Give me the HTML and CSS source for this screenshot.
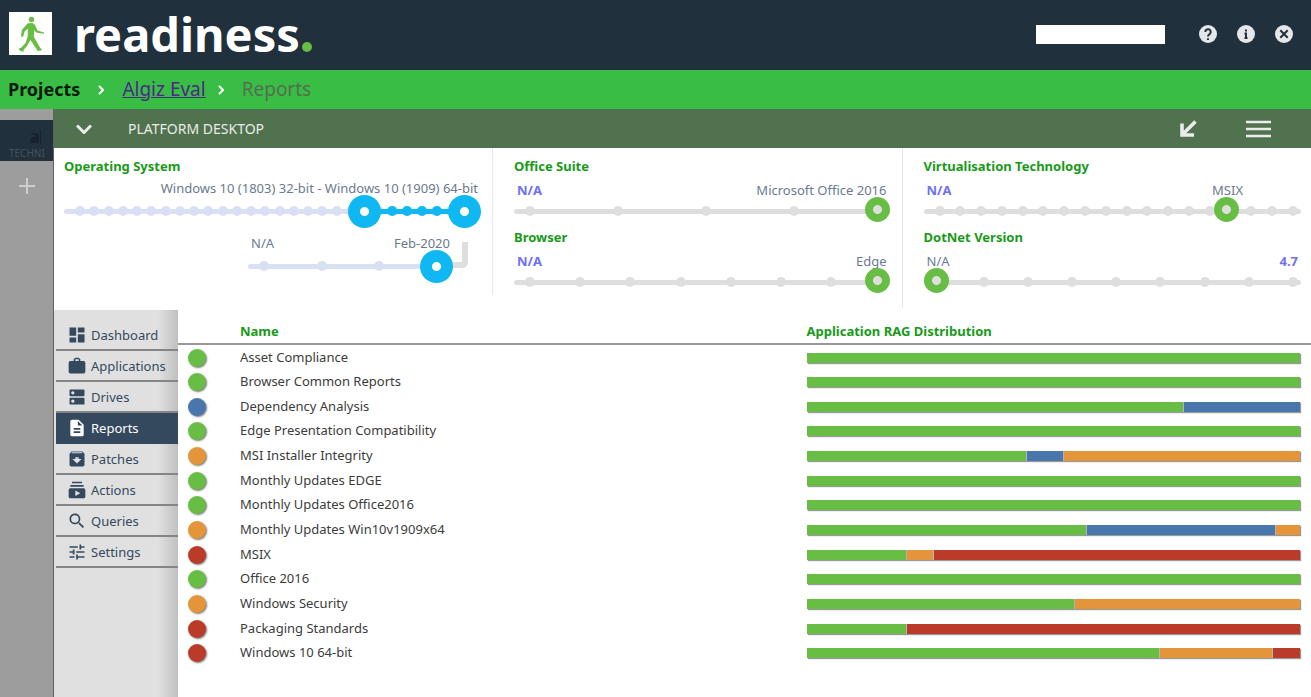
FILE: index.html
```
<!DOCTYPE html>
<html lang="en">
<head>
<meta charset="utf-8">
<title>Readiness - Reports</title>
<link rel="stylesheet" href="styles.css">
</head>
<body>
<header class="topbar">
  <svg class="logo" viewBox="0 0 43 43" aria-hidden="true"><rect width="43" height="43" fill="#fff"/><circle cx="22.500" cy="7.500" r="2.700" fill="#68bd45"/><path d="M18.500 11.500c3-1 6.500-.8 7.500 1.500l2.500 5.500 6.500 2v1.300l-8-1.300-1.800-2.500-.4 6.500 3 5.500 3.500 6 1.500 1.500-.5 1-3.500.5-1-1.500-6.300-9.500-3.500 6-3.500 4 .500 1.500-3-.3-2.300-2 1-1.300 1.500-.2 4.500-5 2-6.500.3-7.500-3.300 2.500-1.500 5.500-2.200-.2.800-6.500z" fill="#68bd45"/></svg>
  <h1 class="brand">readiness<span class="brand-dot"></span></h1>
  <div class="tools">
    <input class="search" type="text" aria-label="Search">
    <button class="round" aria-label="Help"><svg viewBox="0 0 18 18"><circle cx="9" cy="9" r="9"/><path d="M6.300 6.900a2.700 2.700 0 1 1 4.400 2.100C9.500 9.900 9 10.300 9 11.500M9 13.200v1.800" class="cut"/></svg></button>
    <button class="round" aria-label="Information"><svg viewBox="0 0 18 18"><circle cx="9" cy="9" r="9"/><path d="M9 4.500v2M7.500 8.500H9V13M7.500 13h3" class="cut"/></svg></button>
    <button class="round" aria-label="Close"><svg viewBox="0 0 18 18"><circle cx="9" cy="9" r="9"/><path d="M5.300 5.300l7.400 7.400M12.700 5.300l-7.400 7.400" class="cut"/></svg></button>
  </div>
</header>
<nav class="crumbs" aria-label="Breadcrumb">
  <strong>Projects</strong>
  <svg class="sep" viewBox="0 0 6 10"><path d="M1 1l4 4-4 4"/></svg>
  <a href="#project">Algiz Eval</a>
  <svg class="sep sep-near" viewBox="0 0 6 10"><path d="M1 1l4 4-4 4"/></svg>
  <span class="here">Reports</span>
</nav>
<div class="shell">
  <aside class="rail">
    <button class="rail-tab"><svg viewBox="0 0 14 14"><path d="M2 5l3-2h4l2 2v8H2v-4l2-2h3V5zM12 0h1v14h-1z"/></svg><span>TECHNI</span></button>
    <button class="rail-add" aria-label="Add"><svg viewBox="0 0 18 18"><path d="M9 1v16M1 9h16"/></svg></button>
  </aside>
  <main class="main">
    <div class="platform">
      <button class="bar-btn" aria-label="Collapse"><svg width="16" height="10" viewBox="0 0 16 10"><path d="M1 1.500l7 7 7-7" fill="none" stroke="#ececec" stroke-width="3"/></svg></button>
      <h2>PLATFORM DESKTOP</h2>
      <button class="bar-btn bar-end" aria-label="Shrink"><svg width="17" height="17" viewBox="0 0 17 17"><path d="M15.500 1.500L3 14M2 3.500V15h12" fill="none" stroke="#ececec" stroke-width="3.600"/></svg></button>
      <button class="bar-btn" aria-label="Menu"><svg width="25" height="18" viewBox="0 0 25 18"><path d="M0 2h25M0 9h25M0 16h25" stroke="#ececec" stroke-width="2.600"/></svg></button>
    </div>
    <section class="settings">
      <div class="group group-os">
        <h3>Operating System</h3>
        <div class="labels labels-end"><span>Windows 10 (1803) 32-bit - Windows 10 (1909) 64-bit</span></div>
        <div class="slider blue" id="os"><div class="ticks"></div><div class="fill"><div class="ticks fill-ticks"><i></i><i></i><i></i><i></i></div></div>
          <input type="range" min="0" max="27" value="20" aria-label="Operating system from"><input type="range" min="0" max="27" value="27" aria-label="Operating system to"></div>
        <div class="update">
          <div class="elbow"></div>
          <div class="labels"><span>N/A</span><span>Feb-2020</span></div>
          <div class="slider blue"><div class="ticks"><i></i><i></i><i></i><i></i></div><input type="range" min="0" max="3" value="3" aria-label="Update level"></div>
        </div>
      </div>
      <div class="group">
        <h3>Office Suite</h3>
        <div class="labels"><b>N/A</b><span>Microsoft Office 2016</span></div>
        <div class="slider"><div class="ticks"><i></i><i></i><i></i><i></i><i></i></div><input type="range" min="0" max="4" value="4" aria-label="Office suite"></div>
        <h3>Browser</h3>
        <div class="labels"><b>N/A</b><span>Edge</span></div>
        <div class="slider"><div class="ticks"><i></i><i></i><i></i><i></i><i></i><i></i><i></i><i></i></div><input type="range" min="0" max="7" value="7" aria-label="Browser"></div>
      </div>
      <div class="group">
        <h3>Virtualisation Technology</h3>
        <div class="labels labels-msix"><b>N/A</b><span>MSIX</span></div>
        <div class="slider"><div class="ticks"><i></i><i></i><i></i><i></i><i></i><i></i><i></i><i></i><i></i><i></i><i></i><i></i><i></i><i></i><i></i><i></i><i></i><i></i></div><input type="range" min="0" max="17" value="14" aria-label="Virtualisation technology"></div>
        <h3>DotNet Version</h3>
        <div class="labels"><span>N/A</span><b>4.7</b></div>
        <div class="slider"><div class="ticks"><i></i><i></i><i></i><i></i><i></i><i></i><i></i><i></i><i></i></div><input type="range" min="0" max="8" value="0" aria-label="DotNet version"></div>
      </div>
    </section>
    <div class="work">
      <nav class="menu" aria-label="Sections">
        <a href="#dashboard"><svg viewBox="0 0 24 24"><path d="M3 13h8V3H3zm0 8h8v-6H3zm10 0h8V11h-8zm0-18v6h8V3z"/></svg>Dashboard</a>
        <a href="#applications"><svg viewBox="0 0 24 24"><path d="M20 6h-4V4l-2-2h-4L8 4v2H4a2 2 0 0 0-2 2v11a2 2 0 0 0 2 2h16a2 2 0 0 0 2-2V8a2 2 0 0 0-2-2zm-6 0h-4V4h4z"/></svg>Applications</a>
        <a href="#drives"><svg viewBox="0 0 24 24"><path d="M20 13H4a1 1 0 0 0-1 1v6a1 1 0 0 0 1 1h16a1 1 0 0 0 1-1v-6a1 1 0 0 0-1-1zM7 19a2 2 0 1 1 0-4 2 2 0 0 1 0 4zM20 3H4a1 1 0 0 0-1 1v6a1 1 0 0 0 1 1h16a1 1 0 0 0 1-1V4a1 1 0 0 0-1-1zM7 9a2 2 0 1 1 0-4 2 2 0 0 1 0 4z"/></svg>Drives</a>
        <a href="#reports" class="active" aria-current="page"><svg viewBox="0 0 24 24"><path d="M14 2H6a2 2 0 0 0-2 2v16a2 2 0 0 0 2 2h12a2 2 0 0 0 2-2V8zm2 16H8v-2h8zm0-4H8v-2h8zm-3-5V3.500L18.500 9z"/></svg>Reports</a>
        <a href="#patches"><svg viewBox="0 0 24 24"><path d="M20.500 5.200l-1.400-1.700A1.500 1.500 0 0 0 18 3H6c-.5 0-.9.200-1.200.6L3.500 5.200c-.3.400-.5.800-.5 1.300V19a2 2 0 0 0 2 2h14a2 2 0 0 0 2-2V6.500c0-.5-.2-.9-.5-1.300zM12 17.500L6.500 12H10v-2h4v2h3.500zM5.100 5l.8-1h12l.9 1z"/></svg>Patches</a>
        <a href="#actions"><svg viewBox="0 0 24 24"><path d="M20 8H4V6h16zm-2-6H6v2h12zm4 10v8a2 2 0 0 1-2 2H4a2 2 0 0 1-2-2v-8a2 2 0 0 1 2-2h16a2 2 0 0 1 2 2zm-6 4l-6-3.300v6.500z"/></svg>Actions</a>
        <a href="#queries"><svg viewBox="0 0 24 24"><path d="M15.500 14h-.8l-.3-.3A6.500 6.500 0 1 0 13.700 14.400l.3.300v.8l5 5 1.500-1.500zm-6 0a4.500 4.500 0 1 1 0-9 4.500 4.500 0 0 1 0 9z"/></svg>Queries</a>
        <a href="#settings"><svg viewBox="0 0 24 24"><path d="M3 17v2h6v-2zM3 5v2h10V5zm10 16v-2h8v-2h-8v-2h-2v6zM7 9v2H3v2h4v2h2V9zm14 4v-2H11v2zm-6-4h2V7h4V5h-4V3h-2z"/></svg>Settings</a>
      </nav>
      <div class="panel">
        <table class="reports">
          <thead><tr><th class="c-status"></th><th class="c-name">Name</th><th>Application RAG Distribution</th></tr></thead>
          <tbody id="rows"></tbody>
        </table>
      </div>
    </div>
  </main>
</div>
<script src="app.js"></script>
</body>
</html>
```
FILE: app.js
```
const reports = [
  ["Asset Compliance", "g", [["g", 493]]],
  ["Browser Common Reports", "g", [["g", 493]]],
  ["Dependency Analysis", "b", [["g", 377], ["b", 116]]],
  ["Edge Presentation Compatibility", "g", [["g", 493]]],
  ["MSI Installer Integrity", "o", [["g", 220], ["b", 36], ["o", 237]]],
  ["Monthly Updates EDGE", "g", [["g", 493]]],
  ["Monthly Updates Office2016", "g", [["g", 493]]],
  ["Monthly Updates Win10v1909x64", "o", [["g", 280], ["b", 189], ["o", 24]]],
  ["MSIX", "r", [["g", 100], ["o", 26], ["r", 367]]],
  ["Office 2016", "g", [["g", 493]]],
  ["Windows Security", "o", [["g", 268], ["o", 225]]],
  ["Packaging Standards", "r", [["g", 100], ["r", 393]]],
  ["Windows 10 64-bit", "r", [["g", 354], ["o", 112], ["r", 27]]]
];
document.getElementById("rows").innerHTML = reports.map(([name, status, parts]) =>
  `<tr><td><span class="dot ${status}"></span></td><td>${name}</td><td><div class="rag">${
    parts.map(([c, n]) => `<span class="${c}" style="flex-grow:${n}"></span>`).join("")
  }</div></td></tr>`).join("");
document.querySelector("#os .ticks").innerHTML = "<i></i>".repeat(28);
```
FILE: styles.css
```
* { box-sizing: border-box; }
body { margin: 0; min-height: 100vh; display: flex; flex-direction: column; font: 13px/20px "Noto Sans", "Open Sans", sans-serif; background: #fff; color: #3c3c3c; }
h1, h2, h3 { margin: 0; }
button { border: 0; padding: 0; background: none; font: inherit; display: block; }
svg { display: block; flex: none; }

.topbar { display: flex; align-items: center; height: 70px; padding: 0 18px 2px 9px; background: #20303c; }
.logo { width: 43px; height: 43px; margin-bottom: 2px; }
.brand { margin-left: 22px; color: #fff; font: 700 47px/64px "Noto Sans", sans-serif; }
.brand-dot { display: inline-block; width: 10px; height: 10px; margin-left: 2px; border-radius: 50%; background: #68bd45; }
.tools { display: flex; align-items: center; gap: 20px; margin-left: auto; }
.search { width: 129px; height: 19px; margin-right: 14px; border: 0; background: #fff; }
.round svg { width: 18px; height: 18px; fill: #e6e7e8; }
.round .cut { fill: none; stroke: #20303c; stroke-width: 2; }

.crumbs { display: flex; align-items: center; height: 39px; padding: 0 8px 2px; background: #3abd44; font-size: 19px; line-height: 28px; }
.crumbs strong { color: #0c1a0c; font-size: 18px; }
.crumbs a { color: #4b2a86; margin-right: 12px; }
.crumbs .here { color: #52704f; }
.sep { width: 6px; height: 10px; margin: 3px 18px 0; fill: none; stroke: #fff; stroke-width: 2; }
.sep-near { margin-left: 0; }

.shell { flex: 1; display: flex; }
.rail { width: 54px; flex: none; padding-top: 11px; background: #9d9d9d; border-right: 1px solid #616161; }
.rail-tab { width: 100%; height: 41px; padding: 9px 0 0 9px; overflow: hidden; background: #20303c; color: #46525b; font-size: 10px; line-height: 14px; text-align: left; }
.rail-tab svg { width: 14px; height: 14px; margin-left: 19px; fill: #17242f; }
.rail-tab span { display: block; margin-top: 2px; }
.rail-add { margin: 16px auto 0; }
.rail-add svg { width: 18px; height: 18px; stroke: #cfcfcf; stroke-width: 2; }
.main { flex: 1; min-width: 0; display: flex; flex-direction: column; }

.platform { display: flex; align-items: center; height: 39px; padding: 0 40px 0 22px; background: #51724f; }
.platform h2 { margin-left: 36px; color: #e8ece8; font-size: 14px; font-weight: 400; }
.bar-end { margin: 0 49px 0 auto; }

.settings { display: grid; grid-template-columns: 438px 1fr 1fr; align-items: start; min-height: 162px; color: #6b7a90; }
.group { height: 160px; padding: 8px 10px 0 21px; border-left: 1px solid #e8e8e8; }
.group:nth-child(2) { height: 147px; padding-right: 12px; }
.group-os { height: 147px; padding: 8px 11px 0 10px; border-left: 0; }
.group h3 { color: #189a18; font-size: 13px; line-height: 20px; }
.labels { display: flex; justify-content: space-between; height: 20px; margin-top: 4px; padding: 0 3px; }
.labels b { color: #7070f5; }
.labels-msix span { margin-right: 55px; }
.group-os .labels { margin-top: 2px; }
.labels-end { justify-content: flex-end; }
.slider { position: relative; height: 19px; margin-bottom: 8px; }
.slider::before { content: ""; position: absolute; left: 0; right: 0; top: 9px; height: 5px; border-radius: 3px; background: #dedede; }
.ticks { position: absolute; left: 0; right: 0; top: 6px; display: flex; justify-content: space-between; padding: 0 3px 0 11px; }
.ticks i { width: 10px; height: 10px; border-radius: 50%; background: #dedede; }
.slider input { appearance: none; position: absolute; left: 0; top: -3px; width: 100%; height: 25px; margin: 0; background: none; pointer-events: none; }
.slider input::-webkit-slider-thumb { appearance: none; pointer-events: auto; width: 25px; height: 25px; border-radius: 50%; background: radial-gradient(circle, #dedede 4px, #68bd45 5px); }
.blue { height: 25px; }
.blue::before { top: 11px; background: #dae0f4; }
.blue .ticks { top: 8px; padding: 0 11px; }
.blue .ticks i { background: #dae0f4; }
.blue input { top: -3px; height: 33px; }
.blue input::-webkit-slider-thumb { width: 33px; height: 33px; background: radial-gradient(circle, #fff 4px, #0fb8f2 5px); }
.fill { position: absolute; left: 72%; right: 16px; top: 11px; height: 5px; background: #0fb8f2; }
.blue .fill-ticks { top: -3px; padding: 0 23px; }
.blue .fill-ticks i { background: #0fb8f2; }
.update { position: relative; width: 205px; margin: 10px 28px 0 auto; }
.elbow { position: absolute; left: 200px; top: 9px; width: 20px; height: 26px; border: solid #dedede; border-width: 0 6px 6px 0; border-radius: 0 0 6px 0; }

.work { flex: 1; display: flex; }
.menu { width: 124px; flex: none; padding: 10px 0 0 2px; background: linear-gradient(90deg, #e0e0e0 84%, #c0c0c0); }
.menu a { display: flex; align-items: center; gap: 4px; height: 31px; padding-left: 11px; border-bottom: 2px solid #858585; color: #34495e; text-decoration: none; }
.menu svg { width: 20px; height: 20px; fill: #34495e; }
.menu .active { background: #34495e; border-color: #34495e; color: #fff; }
.menu .active svg { fill: #fff; }

.panel { flex: 1; min-width: 0; }
.reports { width: 100%; table-layout: fixed; border-collapse: collapse; }
.reports th { height: 34px; padding: 8px 0 0; border-bottom: 2px solid #989898; color: #189a18; text-align: left; }
.c-status { width: 62px; }
.c-name { width: 50%; }
.reports td { height: 25px; padding: 0 0 1px; line-height: 20px; }
.reports tr:nth-child(3n) td { height: 24px; }
.reports td:last-child { padding-right: 11px; }
.dot { display: block; width: 18px; height: 18px; margin: 2px 0 0 10px; border-radius: 50%; box-shadow: 1px 1px 2px #777; }
.rag { display: flex; gap: 1px; height: 10px; margin-top: 2px; background: #b4b4b4; box-shadow: 1px 1px 1px #999; }
.rag span { flex-basis: 0; }
.g { background: #68bd45; }
.b { background: #4876ad; }
.o { background: #e59539; }
.r { background: #bb3b2a; }
```
